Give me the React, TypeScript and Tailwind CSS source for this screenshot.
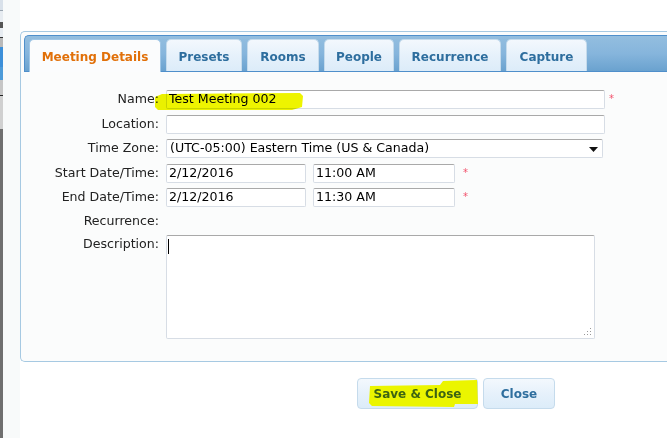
import React from "react";

const Tab = ({ label, w, active }: { label: string; w: number; active?: boolean }) => (
  <div
    style={{ width: w }}
    className={
      active
        ? "h-[33px] -mb-px flex items-center justify-center rounded-t-[5px] border border-b-0 border-[#9fc6e6] bg-[#fbfcfd] text-[12px] font-bold text-[#e17009]"
        : "h-[32px] flex items-center justify-center rounded-t-[5px] border border-b-0 border-[#c5dbec] bg-gradient-to-b from-[#f3f8fd] via-[#e6f1fb] to-[#dcecf9] text-[12px] font-bold text-[#2e6e9e]"
    }
  >
    <span className="mt-[2px]">{label}</span>
  </div>
);

const inputCls =
  "h-[19px] flex items-center pl-[2px] bg-white border border-[#d7dde5] border-t-[#a9a9a9] rounded-[2px] text-[12.6px] text-black leading-none";

const Label = ({ children }: { children: React.ReactNode }) => (
  <div className="w-[135px] shrink-0 text-right text-[12.6px] text-[#222] leading-none">{children}</div>
);

const Star = ({ className }: { className: string }) => (
  <span className={"text-[10px] leading-none text-[#f2506a] " + className}>*</span>
);

export default function App() {
  return (
    <div className="relative w-[667px] h-[438px] flex bg-white overflow-hidden font-['DejaVu_Sans',sans-serif]">
      {/* left strip */}
      <div className="w-[3px] shrink-0 flex flex-col">
        <div className="h-[10px] bg-[#d9e1ea]" />
        <div className="h-[1px] bg-[#9aa5b0]" />
        <div className="h-[11px] bg-[#e7ecf1]" />
        <div className="h-[6px] bg-[#555]" />
        <div className="h-[9px] bg-[#e7ecf1]" />
        <div className="h-[1px] bg-[#333]" />
        <div className="h-[9px] bg-[#b9b9b9]" />
        <div className="h-[20px] bg-[#3c8fd9]" />
        <div className="h-[13px] bg-[#4d9bd9]" />
        <div className="h-[15px] bg-[#c6c6c6]" />
        <div className="h-[1px] bg-[#222]" />
        <div className="h-[33px] bg-[#d0d0d0]" />
        <div className="flex-1 bg-[#6f6f6f]" />
      </div>
      <div className="w-[17px] shrink-0 bg-[#f8fafa]" />

      <div className="flex-1 flex flex-col">
        {/* panel */}
        <div className="mt-[31px] w-[690px] h-[331px] shrink-0 border border-r-0 border-[#a6c9e2] rounded-l-[5px] bg-[#fbfcfc] p-[3px] pr-0 flex flex-col">
          <div className="h-[37px] shrink-0 flex items-end gap-[5px] pl-[4px] border border-r-0 border-[#4f8fcb] rounded-tl-[5px] bg-gradient-to-b from-[#93bedf] via-[#86b5dc] to-[#6aa2cf]">
            <Tab label="Meeting Details" w={132} active />
            <Tab label="Presets" w={76} />
            <Tab label="Rooms" w={72} />
            <Tab label="People" w={70} />
            <Tab label="Recurrence" w={102} />
            <Tab label="Capture" w={81} />
          </div>

          {/* form */}
          <div className="flex flex-col pt-[18px]">
            <div className="flex items-center gap-[7px] h-[19px]">
              <Label>Name:</Label>
              <div className={inputCls + " w-[439px]"}>Test Meeting 002</div>
              <Star className="-ml-[3px] -mt-[2px]" />
            </div>
            <div className="flex items-center gap-[7px] h-[19px] mt-[6px]">
              <Label>Location:</Label>
              <div className={inputCls + " w-[439px]"} />
            </div>
            <div className="flex items-center gap-[7px] h-[19px] mt-[5px]">
              <Label>Time Zone:</Label>
              <div className={inputCls + " w-[437px] justify-between pr-[4px]"}>
                <span className="pl-[1px]">(UTC-05:00) Eastern Time (US &amp; Canada)</span>
                <svg width="9" height="5" viewBox="0 0 9 5" className="mt-[1px]">
                  <path d="M0 0 H9 L4.5 5 Z" fill="#111" />
                </svg>
              </div>
            </div>
            <div className="flex items-center gap-[7px] h-[19px] mt-[6px]">
              <Label>Start Date/Time:</Label>
              <div className={inputCls + " w-[140px]"}>2/12/2016</div>
              <div className={inputCls + " w-[142px]"}>11:00 AM</div>
              <Star className="ml-[1px] -mt-[2px]" />
            </div>
            <div className="flex items-center gap-[7px] h-[19px] mt-[5px]">
              <Label>End Date/Time:</Label>
              <div className={inputCls + " w-[140px]"}>2/12/2016</div>
              <div className={inputCls + " w-[142px]"}>11:30 AM</div>
              <Star className="ml-[1px] -mt-[2px]" />
            </div>
            <div className="flex items-center gap-[7px] h-[19px] mt-[5px]">
              <Label>Recurrence:</Label>
            </div>
            <div className="flex items-start gap-[7px] mt-[4px]">
              <div className="pt-[3px]">
                <Label>Description:</Label>
              </div>
              <div className="relative w-[429px] h-[104px] bg-white border border-[#d7dde5] border-t-[#a9a9a9] rounded-[2px]">
                <div className="absolute left-[1px] top-[3px] w-[1px] h-[15px] bg-black" />
                <svg width="8" height="8" viewBox="0 0 8 8" className="absolute right-[2px] bottom-[2px]">
                  <rect x="6" y="0" width="1" height="1" fill="#999" />
                  <rect x="3" y="3" width="1" height="1" fill="#999" />
                  <rect x="6" y="3" width="1" height="1" fill="#999" />
                  <rect x="0" y="6" width="1" height="1" fill="#999" />
                  <rect x="3" y="6" width="1" height="1" fill="#999" />
                  <rect x="6" y="6" width="1" height="1" fill="#999" />
                </svg>
              </div>
            </div>
          </div>
        </div>

        {/* buttons */}
        <div className="flex gap-[5px] mt-[16px] ml-[337px]">
          <div className="relative w-[121px] h-[31px] flex items-center justify-center rounded-[4px] border border-[#c5dbec] bg-gradient-to-b from-[#f3f8fd] via-[#e6f1fb] to-[#dcecf9] text-[12px] font-bold text-[#3c6412]">
            <svg className="absolute left-[-1px] top-[-1px] pointer-events-none" width="122" height="32" viewBox="0 0 122 32">
              <path d="M13 8 L83 7 L86 3 L120 2 L121 26 L98 26 L97 29 L15 28 L12 25 Z" fill="#ebf500" />
            </svg>
            <span className="relative">Save &amp; Close</span>
          </div>
          <div className="w-[72px] h-[31px] flex items-center justify-center rounded-[4px] border border-[#c5dbec] bg-gradient-to-b from-[#f3f8fd] via-[#e6f1fb] to-[#dcecf9] text-[12px] font-bold text-[#2e6e9e]">
            Close
          </div>
        </div>
      </div>

      {/* highlighter mark on name */}
      <svg
        className="absolute left-0 top-0 mix-blend-multiply pointer-events-none"
        width="667"
        height="438"
        viewBox="0 0 667 438"
      >
        <path
          d="M155 97 L162 94 L300 93 L303 96 L302 107 L292 110 L158 110 L155 107 Z"
          fill="#eef400"
        />
      </svg>
    </div>
  );
}
